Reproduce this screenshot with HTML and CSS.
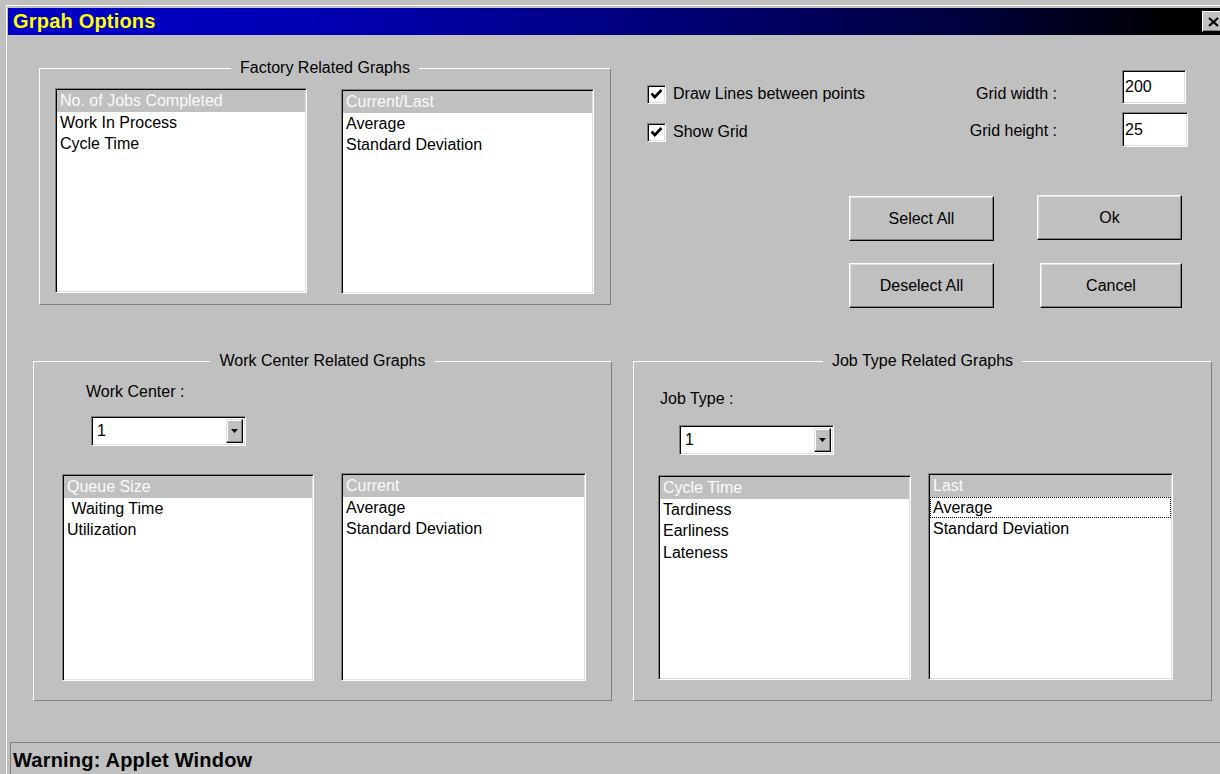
FILE: index.html
```html
<!DOCTYPE html>
<html lang="en">
<head>
<meta charset="utf-8">
<title>Grpah Options</title>
<link rel="stylesheet" href="styles.css">
</head>
<body>
<div class="window">
  <div class="titlebar">
    <span class="title">Grpah Options</span>
    <button class="close" type="button" aria-label="Close">
      <svg width="11" height="10" viewBox="0 0 11 10"><path d="M1 1 L10 9 M10 1 L1 9" stroke="#000" stroke-width="2.2" fill="none"/></svg>
    </button>
  </div>

  <div class="client">
    <div class="top-row">
      <fieldset class="group group-factory">
        <legend>Factory Related Graphs</legend>
        <div class="group-body">
          <div class="lists">
            <ul class="listbox lb-fa">
              <li class="sel">No. of Jobs Completed</li>
              <li>Work In Process</li>
              <li>Cycle Time</li>
            </ul>
            <ul class="listbox lb-fb">
              <li class="sel">Current/Last</li>
              <li>Average</li>
              <li>Standard Deviation</li>
            </ul>
          </div>
        </div>
      </fieldset>

      <div class="panel">
        <div class="opt-row">
          <label class="check">
            <span class="cb"><svg width="17" height="17" viewBox="0 0 17 17"><path d="M3.5 7.5 L6.8 11 L13.5 4" stroke="#000" stroke-width="2.6" fill="none"/></svg></span>
            <span class="check-text">Draw Lines between points</span>
          </label>
          <span class="field-label">Grid width :</span>
          <input class="field field-w" type="text" value="200">
        </div>
        <div class="opt-row opt-row-2">
          <label class="check check-2">
            <span class="cb"><svg width="17" height="17" viewBox="0 0 17 17"><path d="M3.5 7.5 L6.8 11 L13.5 4" stroke="#000" stroke-width="2.6" fill="none"/></svg></span>
            <span class="check-text">Show Grid</span>
          </label>
          <span class="field-label field-label-2">Grid height :</span>
          <input class="field field-h" type="text" value="25">
        </div>
        <div class="buttons">
          <button class="btn" type="button">Select All</button>
          <button class="btn btn-ok" type="button">Ok</button>
          <button class="btn" type="button">Deselect All</button>
          <button class="btn btn-cancel" type="button">Cancel</button>
        </div>
      </div>
    </div>

    <div class="bottom-row">
      <fieldset class="group group-work">
        <legend>Work Center Related Graphs</legend>
        <div class="group-body">
          <div class="combo-label">Work Center :</div>
          <div class="combo">
            <span class="combo-value">1</span>
            <span class="combo-btn"><svg width="7" height="4" viewBox="0 0 7 4"><path d="M0 0 H7 L3.5 4 Z" fill="#000"/></svg></span>
          </div>
          <div class="lists">
            <ul class="listbox lb-wa">
              <li class="sel">Queue Size</li>
              <li> Waiting Time</li>
              <li>Utilization</li>
            </ul>
            <ul class="listbox lb-wb">
              <li class="sel">Current</li>
              <li>Average</li>
              <li>Standard Deviation</li>
            </ul>
          </div>
        </div>
      </fieldset>

      <fieldset class="group group-job">
        <legend>Job Type Related Graphs</legend>
        <div class="group-body">
          <div class="combo-label">Job Type :</div>
          <div class="combo">
            <span class="combo-value">1</span>
            <span class="combo-btn"><svg width="7" height="4" viewBox="0 0 7 4"><path d="M0 0 H7 L3.5 4 Z" fill="#000"/></svg></span>
          </div>
          <div class="lists">
            <ul class="listbox lb-ja">
              <li class="sel">Cycle Time</li>
              <li>Tardiness</li>
              <li>Earliness</li>
              <li>Lateness</li>
            </ul>
            <ul class="listbox lb-jb">
              <li class="sel">Last</li>
              <li class="focus">Average</li>
              <li>Standard Deviation</li>
            </ul>
          </div>
        </div>
      </fieldset>
    </div>

    <div class="statusbar">Warning: Applet Window</div>
  </div>
</div>
</body>
</html>
```

FILE: styles.css
```css
html, body {
  margin: 0;
  padding: 0;
  overflow: hidden;
  background: #c0c0c0;
}

body {
  width: 1220px;
  height: 774px;
  font-family: "Liberation Sans", Arial, sans-serif;
  font-size: 16px;
  color: #000;
}

/* ---------- window frame ---------- */
.window {
  margin: 5px 0 0 6px;
  padding: 2px 0 0 1px;
  border-top: 1px solid #fff;
  border-left: 1px solid #fff;
  height: 780px;
}

.titlebar {
  width: 1224px;
  height: 27px;
  display: flex;
  align-items: center;
  padding-left: 5px;
  box-sizing: border-box;
  background: linear-gradient(to right, #0000c8 0%, #0000b4 25%, #000080 50%, #00003c 78%, #000008 93.5%, #000 93.7%);
}

.title {
  color: #ffff00;
  font-weight: bold;
  font-size: 20px;
  line-height: 27px;
  letter-spacing: 0.2px;
}

.close {
  margin-left: auto;
  margin-right: 8px;
  width: 22px;
  height: 21px;
  padding: 0;
  display: flex;
  align-items: center;
  justify-content: center;
  background: #c0c0c0;
  border: 1px solid;
  border-color: #fff #000 #000 #fff;
  box-shadow: inset -1px -1px 0 #808080;
}

/* ---------- group boxes ---------- */
.group {
  margin: 0;
  padding: 0;
  min-inline-size: 0;
  box-sizing: border-box;
  border: 1px solid;
  border-color: #fff #808080 #808080 #fff;
}

.group legend {
  margin: 0 auto;
  padding: 0 9px;
  line-height: 20px;
  font-size: 16px;
}

.lists {
  display: flex;
  align-items: flex-start;
}

/* ---------- list boxes ---------- */
.listbox {
  list-style: none;
  margin: 0;
  padding: 1px;
  box-sizing: border-box;
  background: #fff;
  border: 1px solid;
  border-color: #808080 #fff #fff #808080;
  box-shadow: inset 1px 1px 0 #000, inset -1px -1px 0 #dfdfdf;
  overflow: hidden;
}

.listbox li {
  padding-left: 3px;
  line-height: 21.5px;
  white-space: pre;
}

.listbox li.sel {
  background: #c0c0c0;
  color: #fbfbfb;
}

.listbox li.focus {
  outline: 1px dotted #000;
  outline-offset: -1px;
}

/* ---------- top row ---------- */
.top-row {
  display: flex;
  align-items: flex-start;
  margin-top: 23px;
  padding-left: 31px;
}

.group-factory {
  width: 572px;
  padding: 10px 0 10px 0;
}

.group-factory .group-body {
  padding-left: 15px;
}

.group-factory .lists {
  gap: 34px;
}

.lb-fa { width: 252px; height: 205px; }
.lb-fb { width: 253px; height: 205px; margin-top: 1px; }

.panel {
  width: 539px;
  margin: 12px 0 0 36px;
}

.opt-row {
  display: flex;
  align-items: flex-start;
}

.opt-row-2 {
  margin-top: 8px;
}

.check {
  display: flex;
  align-items: center;
  margin-top: 14px;
  line-height: 20px;
}

.check-2 {
  margin-top: 10px;
}

.cb {
  width: 19px;
  height: 19px;
  box-sizing: border-box;
  margin-right: 7px;
  background: #fff;
  border: 1px solid;
  border-color: #808080 #fff #fff #808080;
  box-shadow: inset 1px 1px 0 #000, inset -1px -1px 0 #dfdfdf;
  display: flex;
  align-items: center;
  justify-content: center;
}

.field-label {
  margin-left: auto;
  margin-top: 14px;
  margin-right: 65px;
  line-height: 20px;
}

.field-label-2 {
  margin-top: 9px;
}

.field {
  box-sizing: border-box;
  margin: 0;
  padding: 0 0 0 2px;
  font-family: inherit;
  font-size: 16px;
  color: #000;
  background: #fff;
  border: 1px solid;
  border-color: #808080 #fff #fff #808080;
  box-shadow: inset 1px 1px 0 #000, inset -1px -1px 0 #dfdfdf;
  outline: none;
}

.field-w { width: 64px; height: 34px; }
.field-h { width: 66px; height: 35px; margin-right: -2px; }

.buttons {
  display: grid;
  grid-template-columns: 145px 145px;
  column-gap: 43px;
  row-gap: 22px;
  margin: 49px 0 0 202px;
}

.btn {
  height: 45px;
  margin: 0;
  padding: 0;
  font-family: inherit;
  font-size: 16px;
  color: #000;
  background: #c0c0c0;
  border: 1px solid;
  border-color: #fff #000 #000 #fff;
  box-shadow: inset -1px -1px 0 #808080, inset 1px 1px 0 #dfdfdf;
}

.btn-ok { margin-top: -1px; }
.btn-cancel { margin-left: 3px; }

/* ---------- bottom row ---------- */
.bottom-row {
  display: flex;
  align-items: flex-start;
  gap: 21px;
  margin-top: 43px;
  padding-left: 25px;
}

.combo-label {
  line-height: 20px;
}

.combo {
  width: 155px;
  height: 30px;
  box-sizing: border-box;
  display: flex;
  align-items: center;
  padding: 0 2px 0 5px;
  background: #fff;
  border: 1px solid;
  border-color: #808080 #fff #fff #808080;
  box-shadow: inset 1px 1px 0 #000, inset -1px -1px 0 #dfdfdf;
}

.combo-value {
  flex: 1;
}

.combo-btn {
  width: 17px;
  height: 24px;
  box-sizing: border-box;
  display: flex;
  align-items: center;
  justify-content: center;
  background: #c0c0c0;
  border: 1px solid;
  border-color: #dfdfdf #000 #000 #dfdfdf;
  box-shadow: inset -1px -1px 0 #808080, inset 1px 1px 0 #fff;
}

.group-work,
.group-job {
  width: 579px;
}

.group-work {
  padding: 0 0 19px 0;
}

.group-work .group-body {
  padding-left: 28px;
}

.group-work .combo-label {
  margin: 11px 0 0 24px;
}

.group-work .combo {
  margin: 14px 0 0 29px;
}

.group-work .lists {
  gap: 27px;
  margin-top: 27px;
}

.lb-wa { width: 252px; height: 207px; margin-top: 1px; }
.lb-wb { width: 245px; height: 208px; }

.group-job {
  padding: 0 0 20px 0;
}

.group-job .group-body {
  padding-left: 24px;
}

.group-job .combo-label {
  margin: 18px 0 0 2px;
}

.group-job .combo {
  margin: 16px 0 0 21px;
}

.group-job .lists {
  gap: 17px;
  margin-top: 18px;
}

.lb-ja { width: 253px; height: 205px; margin-top: 2px; }
.lb-jb { width: 245px; height: 207px; }

/* ---------- status bar ---------- */
.statusbar {
  margin: 41px 0 0 2px;
  height: 40px;
  padding-left: 2px;
  border-top: 1px solid #808080;
  border-left: 1px solid #808080;
  font-weight: bold;
  font-size: 20px;
  line-height: 34px;
  letter-spacing: 0.2px;
}
```
